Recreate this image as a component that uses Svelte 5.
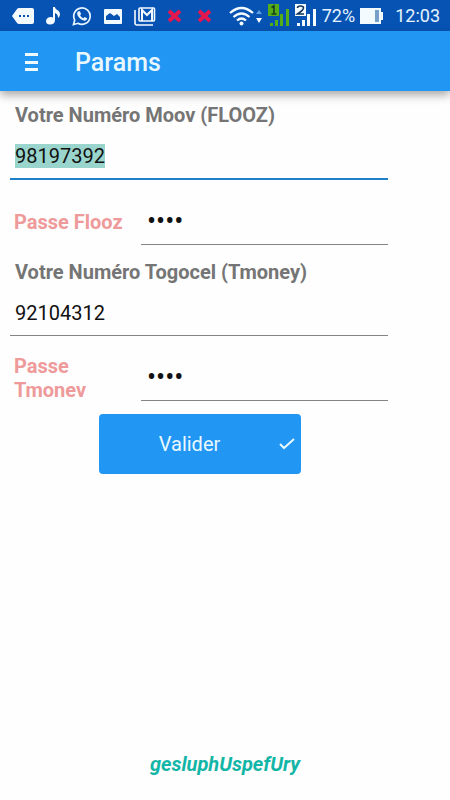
<script>
  import { onMount } from 'svelte';

  let flooz = $state('98197392');
  let floozPass = $state('1234');
  let tmoney = $state('92104312');
  let tmoneyPass = $state('1234');
  let first;

  onMount(() => {
    first.focus();
    first.select();
  });
</script>

<div class="screen">
  <div class="status">
    <div class="icons">
      <svg width="22" height="20" viewBox="0 0 22 20"><path fill="#f4fbff" d="M7 2h13q2 0 2 2v12q0 2-2 2H7q-1 0-2-1L0 10 5 3q1-1 2-1z" /><path fill="#0753b3" d="M7 9h2v2H7zM11 9h2v2h-2zM15 9h2v2h-2z" /></svg>
      <svg width="14" height="20" viewBox="0 0 14 20"><path fill="#f4fbff" d="M7 1h2c0 3 5 3 5 7 0 2-1 3-2 4 0-3-1-4-3-5v7c0 3-2 4.500-5 4.500S0 17 0 15s2-4 5-4l2 .5z" /></svg>
      <svg width="20" height="20" viewBox="0 0 20 20"><path fill="none" stroke="#e6f5ff" stroke-width="1.700" d="M1.500 18.500l1.200-4.500a8.200 8.200 0 1 1 3.200 3.300z" /><path fill="#e6f5ff" d="M6.500 5.200h1.400l1.200 2.700-1 1.400c.8 1.400 1.800 2.300 3.200 3l1.300-1.300 2.600 1.300c0 1.500-1.400 2.500-2.800 2.400-3.600-.5-7-4-7.300-7.100 0-1 .5-1.900 1.400-2.400z" /></svg>
      <svg width="18" height="20" viewBox="0 0 18 20"><rect y="3" width="18" height="15" rx="1" fill="#f4fbff" /><path fill="#0753b3" d="M2 14V10l4-3 4 3 3-2 3 3v3z" /></svg>
      <svg width="22" height="20" viewBox="0 0 22 20"><path fill="none" stroke="#f4fbff" stroke-width="1.600" d="M1 4v13q0 2 2 2h16" /><rect x="5" y="2" width="15.500" height="13" rx="1" fill="none" stroke="#f4fbff" stroke-width="1.600" /><path fill="none" stroke="#f4fbff" stroke-width="2" d="M8 15V4l5 5 5-5v11" /></svg>
      <svg class="cross" width="13" height="20" viewBox="0 0 13 20"><path d="M1 5l11 10M12 5L1 15" /></svg>
      <svg class="cross last" width="13" height="20" viewBox="0 0 13 20"><path d="M1 5l11 10M12 5L1 15" /></svg>
    </div>
    <div class="right">
      <svg width="34" height="22" viewBox="0 0 34 22"><g fill="none" stroke="#f4fbff" stroke-width="2.300"><path d="M1 8q11.500-10 23 0M4.500 12q8-7 16 0M8 15.500q4.500-4 9 0" /></g><circle cx="12.500" cy="18.500" r="2" fill="#f4fbff" /><path fill="#5f9ee2" d="M30 5l3 4h-6z" /><path fill="#f4fbff" d="M27 13h6l-3 5z" /></svg>
      <svg width="22" height="24" viewBox="0 0 22 24"><rect width="11" height="12" fill="#55ad18" /><path fill="none" stroke="#143c24" stroke-width="1.600" d="M3.500 3.500L6 2v8M3.500 10h5" /><path fill="#55ad18" d="M2 19h3v3H2zM7 16h3v6H7zM12 10h3v12h-3zM18 5h3v17h-3z" /></svg>
      <svg width="22" height="24" viewBox="0 0 22 24"><rect width="11" height="12" fill="#f4fbff" /><path fill="none" stroke="#12355c" stroke-width="1.600" d="M2.500 4q0-2 3-2t3 2q0 2-6 6h6.500" /><path fill="#f4fbff" d="M2 19h3v3H2zM7 16h3v6H7zM12 10h3v12h-3zM18 5h3v17h-3z" /></svg>
      <span>72%</span>
      <svg width="24" height="18" viewBox="0 0 24 18"><path fill="#f4fbff" d="M0 1h21v4h2v8h-2v4H0z" /><path fill="#769fc9" d="M15 3h4v12h-4z" /></svg>
      <span class="clock">12:03</span>
    </div>
  </div>

  <header>
    <button class="menu" type="button" aria-label="Menu">
      <svg width="13" height="19" viewBox="0 0 13 19"><path fill="#f0fbff" d="M0 0h13v3H0zM0 8h13v3H0zM0 15h13v3H0z" /></svg>
    </button>
    <h1>Params</h1>
  </header>

  <form onsubmit={(e) => e.preventDefault()}>
    <label class="title" for="flooz">Votre Numéro Moov (FLOOZ)</label>
    <input id="flooz" class="number active" type="text" inputmode="numeric" bind:this={first} bind:value={flooz} />
    <div class="row">
      <label for="flooz-pass">Passe Flooz</label>
      <input id="flooz-pass" type="password" bind:value={floozPass} />
    </div>
    <label class="title" for="tmoney">Votre Numéro Togocel (Tmoney)</label>
    <input id="tmoney" class="number" type="text" inputmode="numeric" bind:value={tmoney} />
    <div class="row">
      <label for="tmoney-pass">Passe Tmonev</label>
      <input id="tmoney-pass" type="password" bind:value={tmoneyPass} />
    </div>
    <button class="submit" type="submit">
      <span>Valider</span>
      <svg width="16" height="12" viewBox="0 0 16 12"><path fill="none" stroke="#e8f8ff" stroke-width="2" d="M1 6l4 4L15 1" /></svg>
    </button>
  </form>

  <footer>gesluphUspefUry</footer>
</div>

<style>
  :global(body) {
    margin: 0;
    background: #fefefe;
  }
  .screen {
    display: flex;
    flex-direction: column;
    min-height: 100vh;
    font-family: Roboto, sans-serif;
    font-size: 20px;
    line-height: 24px;
  }
  svg {
    display: block;
    flex: none;
  }
  .status {
    display: flex;
    align-items: center;
    justify-content: space-between;
    height: 31px;
    padding: 0 10px 0 12px;
    background: #0753b3;
    color: #e4f3ff;
    font-size: 18px;
  }
  .icons {
    display: flex;
    align-items: center;
    gap: 12px;
  }
  .cross path {
    fill: none;
    stroke: #e5174f;
    stroke-width: 4;
  }
  .last {
    margin-left: 5px;
  }
  .right {
    display: flex;
    align-items: center;
    gap: 5px;
  }
  .clock {
    margin-left: 6px;
  }
  header {
    display: flex;
    align-items: center;
    height: 60px;
    padding-left: 25px;
    background: #2196f3;
    box-shadow: 0 4px 9px rgba(0, 0, 0, 0.35);
  }
  button {
    border: 0;
    font: inherit;
    cursor: pointer;
  }
  .menu {
    padding: 2px 0 0;
    background: none;
  }
  h1 {
    margin: 4px 0 0 37px;
    color: #e8f8ff;
    font-size: 25px;
    font-weight: 500;
    line-height: 32px;
  }
  form {
    display: flex;
    flex-direction: column;
    margin: 12px 62px 0 10px;
  }
  label {
    padding-left: 5px;
    font-weight: 700;
  }
  .title {
    color: #757575;
  }
  input {
    box-sizing: border-box;
    min-width: 0;
    height: 44px;
    padding: 0 5px;
    border: 0;
    border-bottom: 1px solid #858585;
    border-radius: 0;
    outline: 0;
    background: none;
    color: #111;
    font: inherit;
  }
  .number {
    height: 52px;
    padding-top: 6px;
    line-height: 27px;
  }
  .active {
    height: 53px;
    border-bottom: 2px solid #1f7fc9;
    caret-color: transparent;
  }
  input::selection {
    background: #99d5cc;
    color: #111;
  }
  .row {
    display: flex;
    align-items: center;
    height: 65px;
    margin-bottom: 15px;
  }
  .row label {
    flex: none;
    box-sizing: border-box;
    width: 131px;
    padding: 18px 10px 0 4px;
    color: #ef9a9a;
  }
  .row input {
    flex: 1;
    align-self: flex-end;
    padding: 0 0 4px 6px;
    font-size: 27px;
  }
  .submit {
    display: flex;
    align-items: center;
    align-self: center;
    width: 202px;
    height: 60px;
    margin: -2px 0 0 2px;
    padding: 0 6px 0 0;
    border-radius: 4px;
    background: #2196f3;
    color: #e8f8ff;
  }
  .submit span {
    flex: 1;
    padding-left: 1px;
  }
  footer {
    margin-top: auto;
    padding: 0 0 24px;
    color: #13b5a7;
    font-style: italic;
    font-weight: 700;
    text-align: center;
  }
</style>
